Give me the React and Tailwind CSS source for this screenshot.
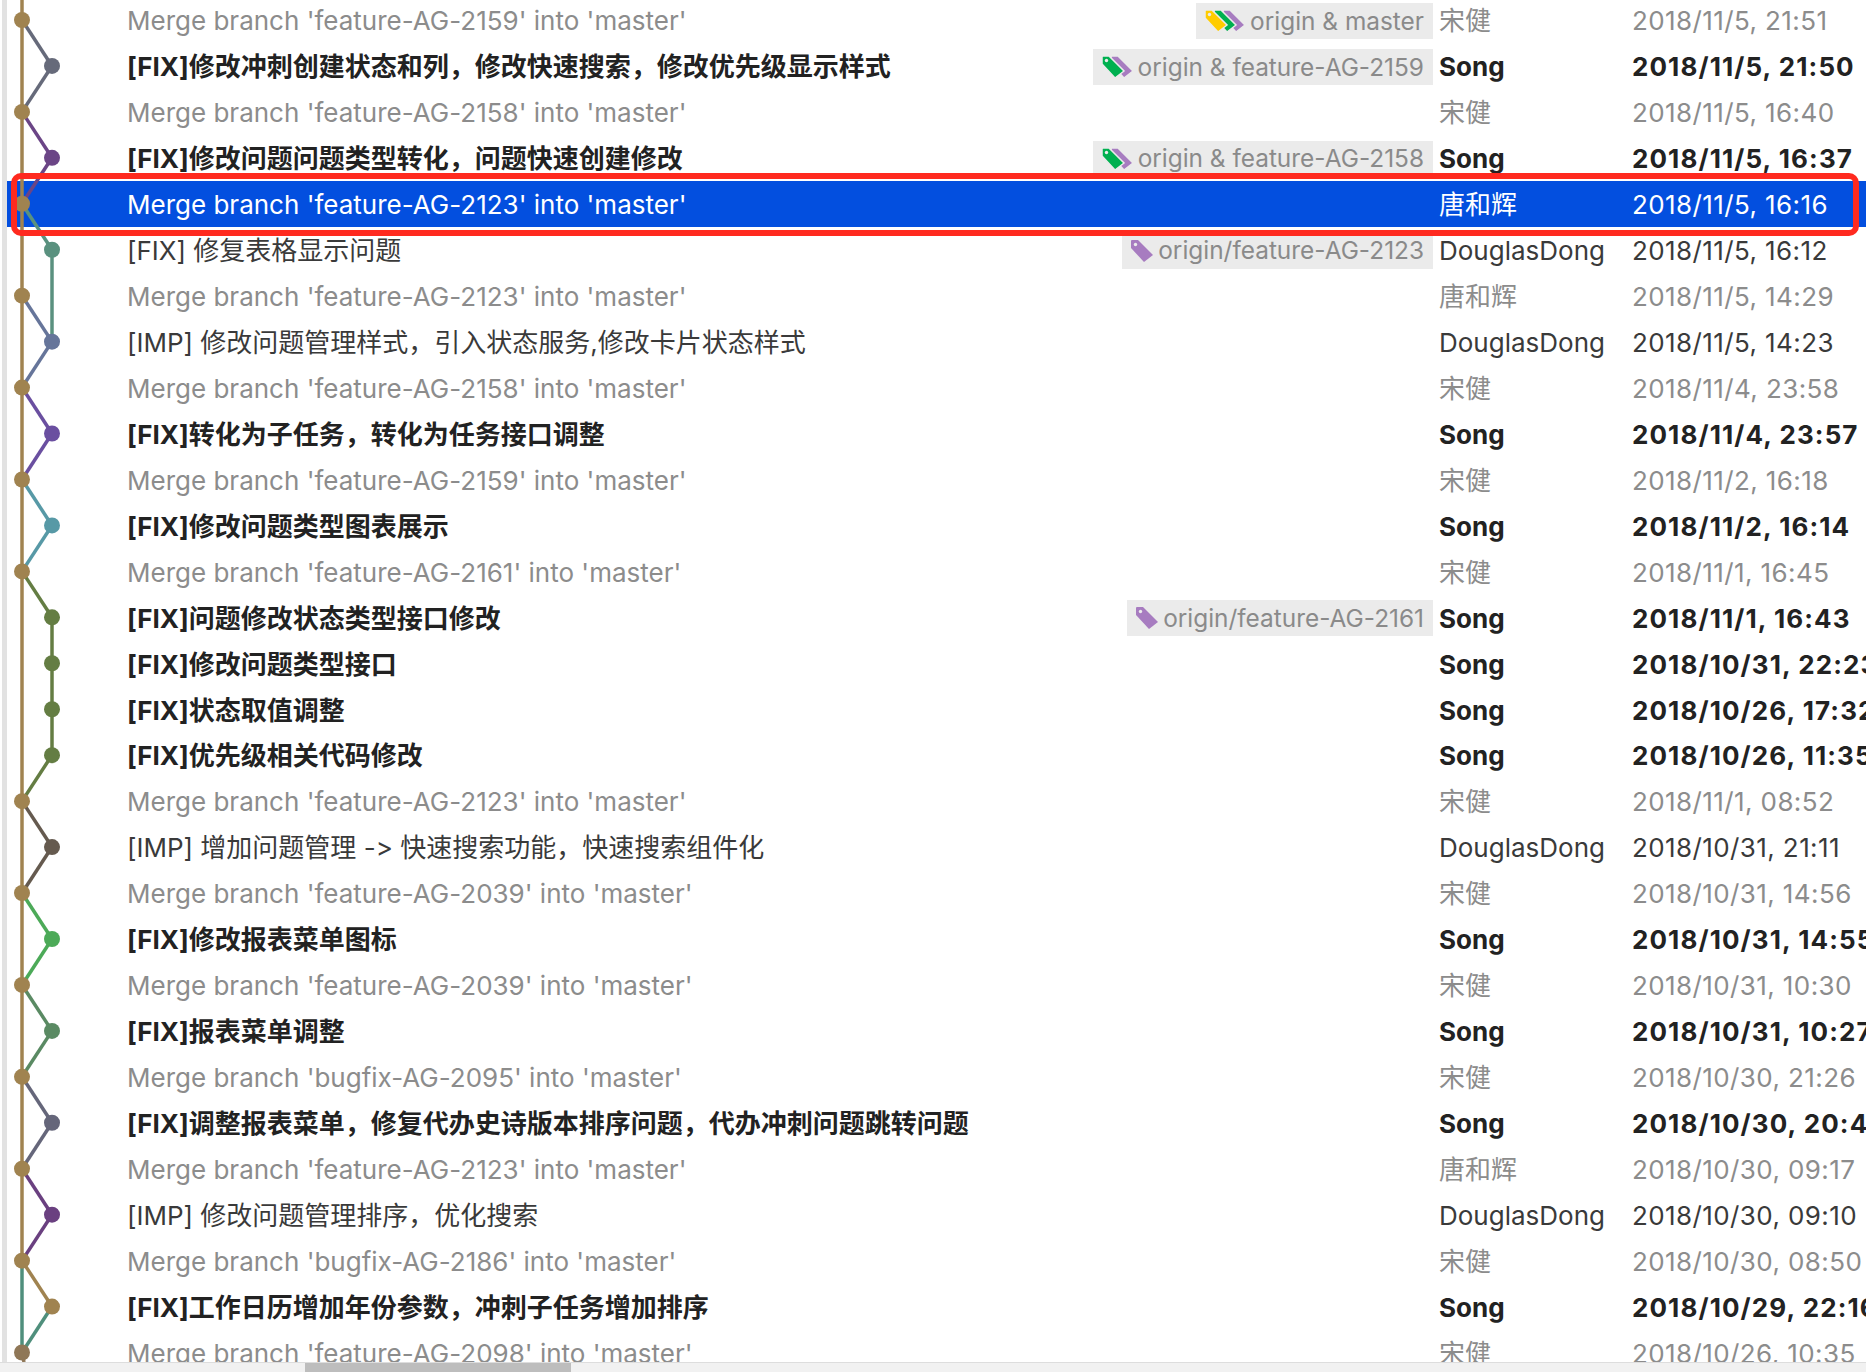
import React from 'react';

const ROW_H = 45.95;
const MAIN = '#a08350';

const rows = [
  { msg: "Merge branch 'feature-AG-2159' into 'master'", author: '宋健', date: '2018/11/5, 21:51', kind: 'merge', tags: ['#ffcc00', '#00b050', '#a77cc0'], ref: 'origin & master' },
  { msg: '[FIX]修改冲刺创建状态和列，修改快速搜索，修改优先级显示样式', author: 'Song', date: '2018/11/5, 21:50', kind: 'bold', tags: ['#00b050', '#a77cc0'], ref: 'origin & feature-AG-2159' },
  { msg: "Merge branch 'feature-AG-2158' into 'master'", author: '宋健', date: '2018/11/5, 16:40', kind: 'merge' },
  { msg: '[FIX]修改问题问题类型转化，问题快速创建修改', author: 'Song', date: '2018/11/5, 16:37', kind: 'bold', tags: ['#00b050', '#a77cc0'], ref: 'origin & feature-AG-2158' },
  { msg: "Merge branch 'feature-AG-2123' into 'master'", author: '唐和辉', date: '2018/11/5, 16:16', kind: 'selected' },
  { msg: '[FIX] 修复表格显示问题', author: 'DouglasDong', date: '2018/11/5, 16:12', kind: 'normal', tags: ['#a77cc0'], ref: 'origin/feature-AG-2123' },
  { msg: "Merge branch 'feature-AG-2123' into 'master'", author: '唐和辉', date: '2018/11/5, 14:29', kind: 'merge' },
  { msg: '[IMP] 修改问题管理样式，引入状态服务,修改卡片状态样式', author: 'DouglasDong', date: '2018/11/5, 14:23', kind: 'normal' },
  { msg: "Merge branch 'feature-AG-2158' into 'master'", author: '宋健', date: '2018/11/4, 23:58', kind: 'merge' },
  { msg: '[FIX]转化为子任务，转化为任务接口调整', author: 'Song', date: '2018/11/4, 23:57', kind: 'bold' },
  { msg: "Merge branch 'feature-AG-2159' into 'master'", author: '宋健', date: '2018/11/2, 16:18', kind: 'merge' },
  { msg: '[FIX]修改问题类型图表展示', author: 'Song', date: '2018/11/2, 16:14', kind: 'bold' },
  { msg: "Merge branch 'feature-AG-2161' into 'master'", author: '宋健', date: '2018/11/1, 16:45', kind: 'merge' },
  { msg: '[FIX]问题修改状态类型接口修改', author: 'Song', date: '2018/11/1, 16:43', kind: 'bold', tags: ['#a77cc0'], ref: 'origin/feature-AG-2161' },
  { msg: '[FIX]修改问题类型接口', author: 'Song', date: '2018/10/31, 22:23', kind: 'bold' },
  { msg: '[FIX]状态取值调整', author: 'Song', date: '2018/10/26, 17:32', kind: 'bold' },
  { msg: '[FIX]优先级相关代码修改', author: 'Song', date: '2018/10/26, 11:35', kind: 'bold' },
  { msg: "Merge branch 'feature-AG-2123' into 'master'", author: '宋健', date: '2018/11/1, 08:52', kind: 'merge' },
  { msg: '[IMP] 增加问题管理 -> 快速搜索功能，快速搜索组件化', author: 'DouglasDong', date: '2018/10/31, 21:11', kind: 'normal' },
  { msg: "Merge branch 'feature-AG-2039' into 'master'", author: '宋健', date: '2018/10/31, 14:56', kind: 'merge' },
  { msg: '[FIX]修改报表菜单图标', author: 'Song', date: '2018/10/31, 14:55', kind: 'bold' },
  { msg: "Merge branch 'feature-AG-2039' into 'master'", author: '宋健', date: '2018/10/31, 10:30', kind: 'merge' },
  { msg: '[FIX]报表菜单调整', author: 'Song', date: '2018/10/31, 10:27', kind: 'bold' },
  { msg: "Merge branch 'bugfix-AG-2095' into 'master'", author: '宋健', date: '2018/10/30, 21:26', kind: 'merge' },
  { msg: '[FIX]调整报表菜单，修复代办史诗版本排序问题，代办冲刺问题跳转问题', author: 'Song', date: '2018/10/30, 20:47', kind: 'bold' },
  { msg: "Merge branch 'feature-AG-2123' into 'master'", author: '唐和辉', date: '2018/10/30, 09:17', kind: 'merge' },
  { msg: '[IMP] 修改问题管理排序，优化搜索', author: 'DouglasDong', date: '2018/10/30, 09:10', kind: 'normal' },
  { msg: "Merge branch 'bugfix-AG-2186' into 'master'", author: '宋健', date: '2018/10/30, 08:50', kind: 'merge' },
  { msg: '[FIX]工作日历增加年份参数，冲刺子任务增加排序', author: 'Song', date: '2018/10/29, 22:16', kind: 'bold' },
  { msg: "Merge branch 'feature-AG-2098' into 'master'", author: '宋健', date: '2018/10/26, 10:35', kind: 'merge' },
];

const kindClass = {
  merge: 'text-[#8c8c8c]',
  normal: 'text-[#3a3a3a]',
  bold: 'text-[#222222] font-bold',
  selected: 'text-white bg-[#034fdf] bg-[length:1848px_100%] bg-no-repeat',
};

const y = (i) => -3 + ROW_H * i + ROW_H / 2;

// side branches: [row, colour]
const sideDots = [
  [1, '#666a7a'], [3, '#6b4586'], [5, '#5a917f'], [7, '#66759a'], [9, '#6a4fa0'], [11, '#5799a6'],
  [13, '#647d43'], [14, '#647d43'], [15, '#647d43'], [16, '#647d43'], [18, '#655a4f'], [20, '#4caa58'],
  [22, '#5a8a63'], [24, '#65667a'], [26, '#6a4080'], [28, MAIN],
];

const mainDots = [0, 2, 4, 6, 8, 10, 12, 17, 19, 21, 23, 25, 27, 29];

// line segments between column a at row r1 and column b at row r2
const X = [22, 52];
const segments = [
  [0, 0, 1, 1, '#666a7a'], [1, 1, 2, 0, '#666a7a'],
  [2, 0, 3, 1, '#6b4586'], [3, 1, 4, 0, '#6b4586'],
  [4, 0, 5, 1, '#5a917f'], [5, 1, 7, 1, '#5a917f'],
  [6, 0, 7, 1, '#66759a'], [7, 1, 8, 0, '#66759a'],
  [8, 0, 9, 1, '#6a4fa0'], [9, 1, 10, 0, '#6a4fa0'],
  [10, 0, 11, 1, '#5799a6'], [11, 1, 12, 0, '#5799a6'],
  [12, 0, 13, 1, '#647d43'], [13, 1, 16, 1, '#647d43'], [16, 1, 17, 0, '#647d43'],
  [17, 0, 18, 1, '#655a4f'], [18, 1, 19, 0, '#655a4f'],
  [19, 0, 20, 1, '#4caa58'], [20, 1, 21, 0, '#4caa58'],
  [21, 0, 22, 1, '#5a8a63'], [22, 1, 23, 0, '#5a8a63'],
  [23, 0, 24, 1, '#65667a'], [24, 1, 25, 0, '#65667a'],
  [25, 0, 26, 1, '#6a4080'], [26, 1, 27, 0, '#6a4080'],
  [27, 0, 28, 1, MAIN], [28, 1, 29, 0, '#4f8f7c'],
];

function Graph() {
  return (
    <svg className="absolute left-0 top-0" width="128" height="1362">
      <line x1="22" y1="0" x2="22" y2={y(27)} stroke={MAIN} strokeWidth="3.5" />
      <line x1="22" y1={y(27)} x2="22" y2={y(29)} stroke="#4f8f7c" strokeWidth="3.5" />
      <line x1="22" y1={y(29)} x2="24" y2="1362" stroke="#8f7757" strokeWidth="3.5" />
      {segments.map(([r1, a, r2, b, c], i) => (
        <line key={i} x1={X[a]} y1={y(r1)} x2={X[b]} y2={y(r2)} stroke={c} strokeWidth="3.5" />
      ))}
      {mainDots.map((r) => (
        <circle key={r} cx="22" cy={y(r)} r="8" fill={r === 29 ? '#8f7757' : MAIN} />
      ))}
      {sideDots.map(([r, c]) => (
        <circle key={r} cx="52" cy={y(r)} r="8" fill={c} />
      ))}
    </svg>
  );
}

function TagIcons({ colors }) {
  const w = 24 + (colors.length - 1) * 9;
  return (
    <svg width={w} height="24" viewBox={`0 0 ${w} 24`} className="shrink-0">
      {colors.map((_, i) => {
        // back tags first so the front one covers them
        const idx = colors.length - 1 - i;
        const front = idx === 0;
        return (
          <g key={idx} transform={`translate(${idx * 9} 0)`}>
            <path
              d="M1 2 Q1 1 2 1 L8 1 L23 16 L14 23 L1 9 Z"
              fill={colors[idx]}
              stroke="#ebebeb"
              strokeWidth={colors.length > 1 ? 1.5 : 0}
            />
            {front && <circle cx="5.5" cy="5.5" r="1.7" fill="#ebebeb" />}
          </g>
        );
      })}
    </svg>
  );
}

function Row({ row }) {
  const bold = row.kind === 'bold';
  return (
    <div className={`flex h-[45.95px] shrink-0 items-center whitespace-nowrap pt-[2px] ${kindClass[row.kind]}`}>
      <div className="w-[120px] shrink-0" />
      <div className="min-w-0 flex-1 overflow-hidden">{row.msg}</div>
      {row.ref && (
        <div className="flex h-9 shrink-0 items-center gap-1 bg-[#ebebeb] pl-2 pr-[9px] text-[24.4px] font-normal text-[#8a8a8a]">
          <TagIcons colors={row.tags} />
          <span>{row.ref}</span>
        </div>
      )}
      <div className={`w-[199px] shrink-0 pl-[6px] ${bold ? 'font-bold' : ''}`}>{row.author}</div>
      <div className={`w-[234px] shrink-0 overflow-hidden ${bold ? 'font-bold tracking-[1.1px]' : 'tracking-[0.4px]'}`}>{row.date}</div>
    </div>
  );
}

export default function App() {
  return (
    <div
      className="relative flex h-[1372px] w-[1866px] flex-col overflow-hidden bg-white text-[26px] [font-variant-ligatures:none]"
      style={{ fontFamily: 'Inter, "Noto Sans CJK SC", sans-serif' }}
    >
      <div className="relative min-h-0 flex-1 overflow-hidden">
        <div className="absolute left-[2px] top-0 h-full w-[5px] bg-[#e2e2e2]" />
        <div className="-mt-[3px] ml-[7px] flex flex-col">
          {rows.map((row, i) => (
            <Row key={i} row={row} />
          ))}
        </div>
        <Graph />
        <div className="absolute left-[11px] top-[173px] h-[63px] w-[1848px] rounded-[10px] border-[6px] border-[#ff2a1f]" />
      </div>
      <div className="flex h-[10px] shrink-0 border-t border-[#dddddd] bg-[#f1f1f1]">
        <div className="ml-[305px] h-full w-[266px] bg-[#bdbdbd]" />
      </div>
    </div>
  );
}
